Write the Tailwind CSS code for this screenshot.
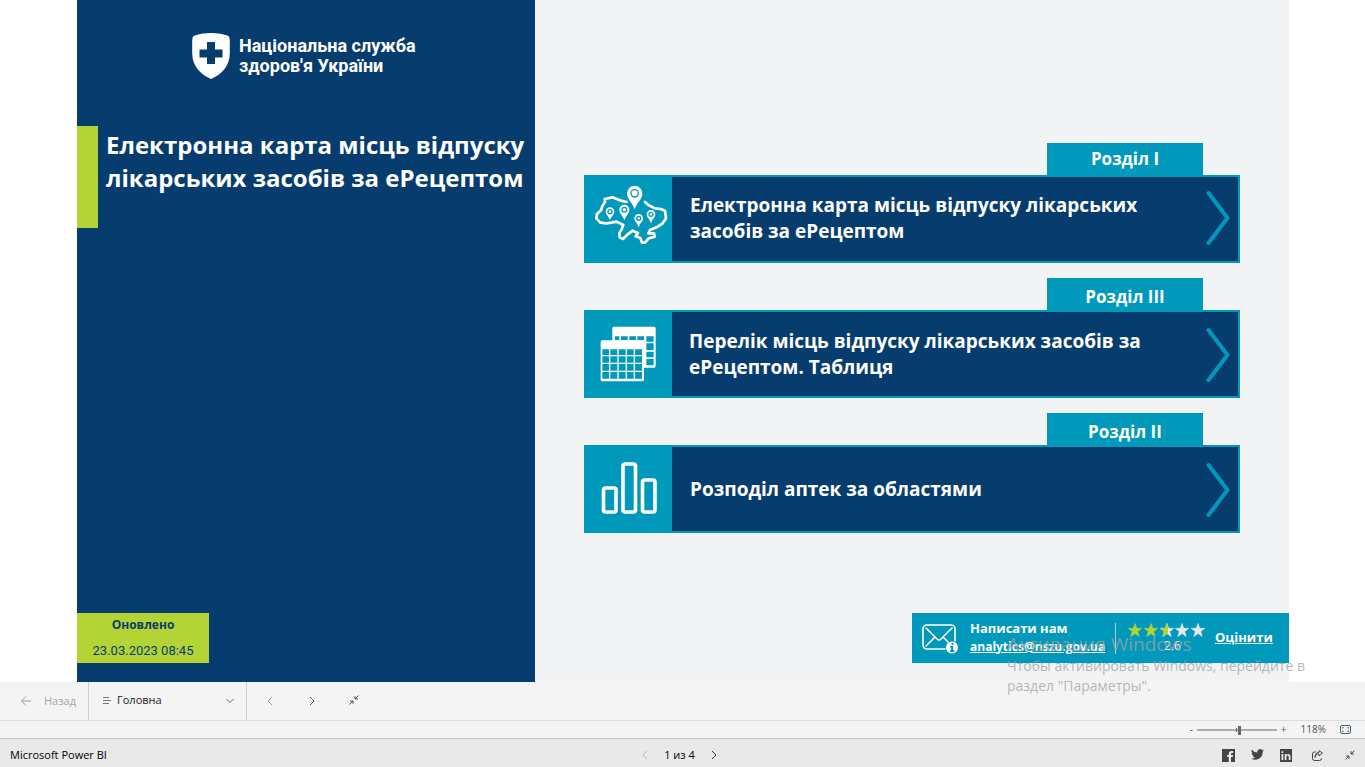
<!DOCTYPE html>
<html lang="uk">
<head>
<meta charset="utf-8">
<meta name="viewport" content="width=device-width, initial-scale=1">
<title>Microsoft Power BI</title>
<script src="https://cdn.jsdelivr.net/npm/@tailwindcss/browser@4"></script>
</head>
<body class="relative flex min-h-screen flex-col bg-white font-['Open_Sans','Noto_Sans',sans-serif]">

<main class="flex flex-1 pr-[76px] pl-[77px]">
  <!-- Title panel -->
  <section class="flex w-[458px] shrink-0 flex-col bg-[#073d6e]">
    <div class="flex items-center gap-[9px] pt-8 pl-[115px]">
      <svg class="h-12 w-[38px] shrink-0" viewBox="0 0 38 48" aria-hidden="true">
        <path fill="#fff" d="M19 1C25 1 32 2 36.500 4C37.500 5 37.800 7 37.800 10V21C37.800 34 30 42 19 47C8 42 .2 34 .2 21V10C.2 7 .5 5 1.500 4C6 2 13 1 19 1Z"/>
        <path fill="#073d6e" d="M15 10h8v7.500h7.500v8H23V32h-8v-6.500H7.500v-8H15z"/>
      </svg>
      <p class="font-[Roboto,sans-serif] text-[18px] leading-5 font-bold whitespace-nowrap text-white">Національна служба<br>здоров'я України</p>
    </div>
    <div class="mt-[46px] flex h-[102px] gap-2">
      <div class="w-[21px] shrink-0 bg-[#b4d334]"></div>
      <h1 class="pt-[2px] text-[24px] leading-[33px] font-bold whitespace-nowrap text-white">Електронна карта місць відпуску<br>лікарських засобів за еРецептом</h1>
    </div>
    <div class="mt-auto mb-[19px] flex h-[50px] w-[132px] flex-col items-center justify-between bg-[#b4d334] pt-[2px] pb-[2px] text-[#073d6e]">
      <p class="text-[12px] leading-5 font-bold">Оновлено</p>
      <p class="font-[Roboto,sans-serif] text-[13px] leading-5">23.03.2023 08:45</p>
    </div>
  </section>

  <!-- Sections -->
  <section class="flex flex-1 flex-col bg-[#f1f3f5] pt-[143px]">
    <nav class="flex flex-col gap-[15px] pr-[49px] pl-[49px]">
      <a href="#map" class="flex flex-col">
        <span class="mr-[37px] flex h-8 w-[156px] items-center justify-center self-end bg-[#0099bb] text-[17px] font-bold text-white">Розділ I</span>
        <span class="flex h-[88px] border-2 border-[#0099bb] bg-[#073d6e]">
          <span class="flex w-[86px] shrink-0 justify-center bg-[#0099bb] pl-[6px]">
            <svg class="mt-px h-[76px] w-[84px] shrink-0" viewBox="0 0 252 228" fill="none" aria-hidden="true">
              <path stroke="#fff" stroke-width="8" stroke-linejoin="round" stroke-linecap="round" d="M110 72L90 67L67 58L44 63L45 73L37 84L33 97L21 108L19 121L31 134L50 136L80 131L100 141L95 154L88 166L89 178L99 183L112 170L128 158L144 165L137 175L151 180L156 194L165 194L176 181L194 176L192 166L175 166L180 156L200 148L218 136L228 121L225 98L212 93L195 91L175 81L165 72"/>
              <g fill="#fff">
                <path d="M134 94C127 74 111 64 111 46a23 23 0 0 1 46 0C157 64 141 74 134 94z"/>
                <path d="M60 127C57 115 47 110 47 101a13 13 0 0 1 26 0C73 110 63 115 60 127z"/>
                <path d="M103 127C99 113 88 107 88 95a15 15 0 0 1 30 0C118 107 107 113 103 127z"/>
                <path d="M146 149C143 136 133 131 133 121a13 13 0 0 1 26 0C159 131 149 136 146 149z"/>
                <path d="M183 137C180 124 170 119 170 109a13 13 0 0 1 26 0C196 119 186 124 183 137z"/>
              </g>
              <g stroke="#0099bb" stroke-width="4">
                <circle cx="134" cy="46" r="11"/><circle cx="60" cy="101" r="6"/><circle cx="103" cy="95" r="7"/><circle cx="146" cy="121" r="6"/><circle cx="183" cy="109" r="6"/>
              </g>
            </svg>
          </span>
          <span class="flex-1 self-center pb-[2px] pl-[18px] text-[19px] leading-[26px] font-bold whitespace-nowrap text-white">Електронна карта місць відпуску лікарських<br>засобів за еРецептом</span>
          <svg class="mr-2 h-14 w-6 shrink-0 self-center" viewBox="0 0 24 56" fill="none" stroke="#0099bb" stroke-width="4" stroke-linecap="round" stroke-linejoin="round" aria-hidden="true"><path d="M2.500 2L21.500 27L2.500 52"/></svg>
        </span>
      </a>

      <a href="#list" class="flex flex-col">
        <span class="mr-[37px] flex h-8 w-[156px] items-center justify-center self-end bg-[#0099bb] pt-[6px] text-[17px] font-bold text-white">Розділ III</span>
        <span class="flex h-[88px] border-2 border-[#0099bb] bg-[#073d6e]">
          <span class="flex w-[86px] shrink-0 items-center justify-center bg-[#0099bb]">
            <svg class="mr-[2px] h-14 w-14" viewBox="0 0 168 168" aria-hidden="true">
              <path fill="#fff" fill-rule="evenodd" d="M42 2h120a5 5 0 0 1 5 5v113a5 5 0 0 1-5 5H132V46H37V7a5 5 0 0 1 5-5zM45 31v12h13V31zM63 31v12h20V31zM88 31v12h20V31zM112 31v12h20V31zM139 31v16h22V31zM139 52v20h22V52zM139 77v17h22V77zM139 99v19h22V99z"/>
              <rect x="2" y="43" width="130" height="123" rx="5" fill="#fff"/>
              <path fill="#0099bb" d="M7 70h20v17H7zM31 70h21v17H31zM56 70h21v17H56zM81 70h20v17H81zM105 70h21v17h-21zM7 91h20v19H7zM31 91h21v19H31zM56 91h21v19H56zM81 91h20v19H81zM105 91h21v19h-21zM7 114h20v20H7zM31 114h21v20H31zM56 114h21v20H56zM81 114h20v20H81zM105 114h21v20h-21zM7 138h20v20H7zM31 138h21v20H31zM56 138h21v20H56zM81 138h20v20H81zM105 138h21v20h-21z"/>
            </svg>
          </span>
          <span class="flex-1 self-center pb-px pl-[17px] text-[19px] leading-[26px] font-bold whitespace-nowrap text-white">Перелік місць відпуску лікарських засобів за<br>еРецептом. Таблиця</span>
          <svg class="mr-2 h-14 w-6 shrink-0 self-center" viewBox="0 0 24 56" fill="none" stroke="#0099bb" stroke-width="4" stroke-linecap="round" stroke-linejoin="round" aria-hidden="true"><path d="M2.500 4L21.500 29L2.500 54"/></svg>
        </span>
      </a>

      <a href="#regions" class="flex flex-col">
        <span class="mr-[37px] flex h-8 w-[156px] items-center justify-center self-end bg-[#0099bb] pt-[6px] text-[17px] font-bold text-white">Розділ II</span>
        <span class="flex h-[88px] border-2 border-[#0099bb] bg-[#073d6e]">
          <span class="flex w-[86px] shrink-0 items-center justify-center bg-[#0099bb]">
            <svg class="mb-[2px] h-[52px] w-14" viewBox="0 0 56 52" fill="none" stroke="#fff" stroke-width="3.600" aria-hidden="true"><rect x="2.500" y="26" width="12.500" height="24" rx="2"/><rect x="22" y="2" width="12.500" height="48" rx="2"/><rect x="41.500" y="18" width="12.500" height="32" rx="2"/></svg>
          </span>
          <span class="flex-1 self-center pb-px pl-[18px] text-[19px] leading-[26px] font-bold whitespace-nowrap text-white">Розподіл аптек за областями</span>
          <svg class="mr-2 h-14 w-6 shrink-0 self-center" viewBox="0 0 24 56" fill="none" stroke="#0099bb" stroke-width="4" stroke-linecap="round" stroke-linejoin="round" aria-hidden="true"><path d="M2.500 4L21.500 29L2.500 54"/></svg>
        </span>
      </a>
    </nav>

    <div class="mt-auto mb-[19px] flex h-[50px] w-[377px] items-center self-end bg-[#0099bb] pl-[9px] text-[13px] text-white">
      <svg class="h-8 w-[38px] shrink-0" viewBox="0 0 38 32" fill="none" stroke="#fff" stroke-width="1.600" stroke-linecap="round" stroke-linejoin="round" aria-hidden="true">
        <path d="M24 27H6a4 4 0 0 1-4-4V7a4 4 0 0 1 4-4h24a4 4 0 0 1 4 4v12M5 6l11 11q2 2 4 0L31 6M5 24l8-8M23 16l4 4"/>
        <circle cx="31" cy="25.500" r="6" fill="#fff" stroke="none"/>
        <path stroke="#0099bb" stroke-width="2" d="M31.500 21.800v.1M30 24.800h1.200v4.200M29.800 29h2.800"/>
      </svg>
      <div class="ml-[11px] w-[145px] shrink-0 pb-[2px] leading-[18px] font-bold whitespace-nowrap">
        <p>Написати нам</p>
        <a href="mailto:analytics@nszu.gov.ua" class="text-[12px] underline">analytics@nszu.gov.ua</a>
      </div>
      <div class="h-[31px] w-px bg-white/60"></div>
      <div class="ml-3 flex w-[77px] flex-col items-center">
        <svg class="h-[15px] w-[77px]" viewBox="0 0 77 15" role="img" aria-label="2.6 / 5">
          <defs><path id="star" d="M7 .5l1.700 4.800 5 .1-4 3.100 1.500 5L7 10.600 2.800 13.500l1.500-5L.3 5.400l5-.1z"/><clipPath id="half"><path d="M0 0h8v15H0z"/></clipPath></defs>
          <g fill="#b4d334" stroke="#b4d334" stroke-width=".6"><use href="#star"/><use href="#star" x="16"/></g>
          <g fill="#e6e9ee" stroke="#e6e9ee" stroke-width=".6"><use href="#star" x="32"/><use href="#star" x="47"/><use href="#star" x="63"/></g>
          <g transform="translate(32 0)"><use href="#star" fill="#b4d334" stroke="#b4d334" stroke-width=".6" clip-path="url(#half)"/></g>
        </svg>
        <span class="pl-3 text-[12px] leading-4">2.6</span>
      </div>
      <a href="#rate" class="ml-[10px] font-bold underline">Оцінити</a>
    </div>
  </section>
</main>

<!-- Page navigation -->
<div class="flex h-[39px] shrink-0 items-stretch border-b border-[#dcdcdc] bg-[#f4f4f4] text-[11px] text-[#222]">
  <button type="button" class="flex w-[88px] items-center gap-3 pl-5 text-[#a6a6a6]">
    <svg class="h-3 w-3" viewBox="0 0 12 12" fill="none" stroke="#999" aria-hidden="true"><path d="M6 1.500L1.500 6 6 10.500M1.500 6H11"/></svg>Назад</button>
  <div class="relative flex w-[159px] items-center border-x border-[#cfcfcf]">
    <svg class="absolute left-[14px] h-2 w-2" viewBox="0 0 8 8" stroke="#777" aria-hidden="true"><path d="M0 .5h6M0 3.500h8M0 6.500h6"/></svg>
    <select aria-label="Сторінка" class="h-full w-full appearance-none bg-transparent pb-[2px] pl-7"><option>Головна</option></select>
    <svg class="pointer-events-none absolute right-3 h-[6px] w-2" viewBox="0 0 8 6" fill="none" stroke="#666" aria-hidden="true"><path d="M.5 1L4 4.500 7.500 1"/></svg>
  </div>
  <div class="flex items-center gap-[33px] pl-5">
    <button type="button" aria-label="Попередня"><svg class="h-[10px] w-2" viewBox="0 0 8 10" fill="none" stroke="#999"><path d="M5 1L1 5l4 4"/></svg></button>
    <button type="button" aria-label="Наступна"><svg class="h-[10px] w-2" viewBox="0 0 8 10" fill="none" stroke="#555"><path d="M2 1l4 4-4 4"/></svg></button>
    <button type="button" aria-label="Згорнути" class="pb-[2px]"><svg class="h-[10px] w-[10px]" viewBox="0 0 10 10" fill="none" stroke="#40556b"><path d="M9.500.5L6 4M6 1.200V4h2.800M.5 9.500L4 6M1.200 6H4v2.800"/></svg></button>
  </div>
</div>

<!-- Zoom -->
<div class="flex h-[18px] shrink-0 items-center justify-end border-b border-[#c6c6c6] bg-[#f4f4f4] pr-[14px] text-[10px] text-[#555]">
  <button type="button" aria-label="Зменшити" class="mr-1">-</button>
  <label class="relative flex h-3 w-20 items-center">
    <input type="range" min="0" max="100" value="53" aria-label="Масштаб" class="absolute inset-0 opacity-0">
    <svg class="h-3 w-20" viewBox="0 0 80 12" aria-hidden="true"><path fill="#666" d="M0 5.500h80v1H0zM39 4h1v4h-1zM41 2h3v9h-3z"/></svg>
  </label>
  <button type="button" aria-label="Збільшити" class="mr-[14px] ml-1">+</button>
  <span class="mr-[14px]">118%</span>
  <button type="button" aria-label="На весь екран"><svg class="h-[9px] w-[11px]" viewBox="0 0 11 9" fill="none" stroke="#4b6370"><rect x=".5" y=".5" width="10" height="8" rx="1.500"/><path d="M2.500 3.500v-1h1M8.500 3.500v-1h-1M2.500 5.500v1h1M8.500 5.500v1h-1"/></svg></button>
</div>

<footer class="grid h-7 shrink-0 grid-cols-3 items-center bg-[#e9e9e9] pt-1 pr-[10px] pl-[10px] text-[11px] text-black">
  <a href="#powerbi">Microsoft Power BI</a>
  <div class="flex items-center justify-center gap-[15px] pr-[6px]">
    <button type="button" aria-label="Назад"><svg class="h-[10px] w-2" viewBox="0 0 8 10" fill="none" stroke="#bbb"><path d="M6 1L2 5l4 4"/></svg></button>
    <span>1 из 4</span>
    <button type="button" aria-label="Вперед"><svg class="h-[10px] w-2" viewBox="0 0 8 10" fill="none" stroke="#333"><path d="M2 1l4 4-4 4"/></svg></button>
  </div>
  <div class="flex items-center justify-end gap-4">
    <a href="#facebook" aria-label="Facebook"><svg class="h-[13px] w-[13px]" viewBox="0 0 13 13" fill="#444"><path d="M0 0h13v13H9V8h1.800l.3-2H9V4.800c0-.6.3-.9 1-.9h1.200V2H9.500C7.700 2 6.800 3 6.800 4.500V6H5.200v2h1.600v5H0z"/></svg></a>
    <a href="#twitter" aria-label="Twitter" class="pb-[2px]"><svg class="h-[11px] w-[13px]" viewBox="0 0 24 20" fill="#444"><path d="M24 2.400a10 10 0 0 1-2.800.8A5 5 0 0 0 23.300.5a10 10 0 0 1-3.100 1.200A4.900 4.900 0 0 0 11.800 6.200 14 14 0 0 1 1.700 1a4.900 4.900 0 0 0 1.500 6.600 5 5 0 0 1-2.200-.6 4.900 4.900 0 0 0 3.900 4.900 5 5 0 0 1-2.200.1 4.900 4.900 0 0 0 4.600 3.400A10 10 0 0 1 0 17.500a14 14 0 0 0 21.500-12.500A10 10 0 0 0 24 2.400z"/></svg></a>
    <a href="#linkedin" aria-label="LinkedIn"><svg class="h-[13px] w-3" viewBox="0 0 12 13"><path fill="#444" d="M0 0h12v13H0z"/><path fill="#e9e9e9" d="M1.500 5h1.800v6H1.500zM1.500 2.200h1.800v1.700H1.500zM4.700 5h1.700v.9c.9-1.500 4.100-1.500 4.100 1.500V11H8.700V7.800c0-1.700-2.200-1.600-2.200 0V11H4.700z"/></svg></a>
    <button type="button" aria-label="Поділитися" class="ml-1"><svg class="h-[11px] w-[11px]" viewBox="0 0 11 11" fill="none" stroke="#444"><path d="M4 2H2.500A2 2 0 0 0 .5 4v4.500a2 2 0 0 0 2 2h5a2 2 0 0 0 2-2V8M3 7.500c0-2.500 1.500-3.500 4-3.500v2l3.500-3L7 .7v1.600C4 2.500 3 5 3 7.500z"/></svg></button>
    <button type="button" aria-label="Вийти з повноекранного режиму" class="ml-[6px]"><svg class="h-[10px] w-[10px]" viewBox="0 0 10 10" fill="none" stroke="#444"><path d="M9.500.5L6 4M6 1.200V4h2.800M.5 9.500L4 6M1.200 6H4v2.800"/></svg></button>
  </div>
</footer>

<!-- Windows activation notice, floating over the page -->
<aside class="pointer-events-none absolute right-[56px] bottom-[71px] w-[302px] whitespace-nowrap text-[#a0a0a0]/75">
  <p class="text-[19px] leading-6">Активация Windows</p>
  <p class="text-[14px] leading-5">Чтобы активировать Windows, перейдите в<br>раздел "Параметры".</p>
</aside>
</body>
</html>
